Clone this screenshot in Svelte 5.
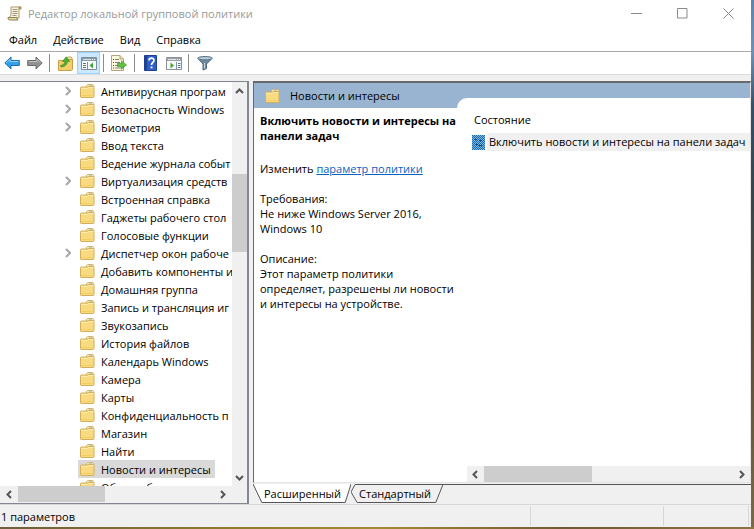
<script>
  const menu = ["Файл", "Действие", "Вид", "Справка"];

  const folders = [
    { name: "Антивирусная програм", nested: true },
    { name: "Безопасность Windows", nested: true },
    { name: "Биометрия", nested: true },
    { name: "Ввод текста" },
    { name: "Ведение журнала событ" },
    { name: "Виртуализация средств", nested: true },
    { name: "Встроенная справка" },
    { name: "Гаджеты рабочего стол" },
    { name: "Голосовые функции" },
    { name: "Диспетчер окон рабоче", nested: true },
    { name: "Добавить компоненты и" },
    { name: "Домашняя группа" },
    { name: "Запись и трансляция иг" },
    { name: "Звукозапись" },
    { name: "История файлов" },
    { name: "Календарь Windows" },
    { name: "Камера" },
    { name: "Карты" },
    { name: "Конфиденциальность п" },
    { name: "Магазин" },
    { name: "Найти" },
    { name: "Новости и интересы" },
    { name: "Общая сборка" }
  ];

  let selected = $state("Новости и интересы");
</script>

{#snippet folder()}
  <svg width="15" height="14" viewBox="0 0 15 14" aria-hidden="true">
    <path d="M6.500 4V1.500l1-1h5.500l.500 1V4z" fill="#f6ebc0" stroke="#d0b671" />
    <path d="M9 2h3" stroke="#9aa59a" />
    <path d="M.5 3.500l.500-.500h6.500l1-.500H14v10l-.500 1H1l-.500-.500z" fill="#f8da80" stroke="#d3af58" />
    <path d="M1 4.500h6.500l1-1h5" fill="none" stroke="#fcecb2" />
    <path d="M1 11.500h12.500" stroke="#f3cd68" />
  </svg>
{/snippet}

{#snippet arrow(dir)}
  <button class="arrow" aria-label="Прокрутка">
    <svg class={dir} width="9" height="9" viewBox="0 0 9 9">
      <path d="M6 1L2.500 4.500L6 8" fill="none" stroke="#555" stroke-width="2" />
    </svg>
  </button>
{/snippet}

<div class="desktop">
  <div class="window">
    <header class="titlebar">
      <svg width="15" height="15" viewBox="0 0 15 15" aria-hidden="true">
        <path d="M4 1h9.500l-1.500 2v9H2.500V11L4 9z" fill="#fbf4d8" stroke="#a99a70" />
        <path d="M1 11.500h9v1.500l1 1H2.500L1 13z" fill="#eadba6" stroke="#8f8158" />
        <path d="M5.500 3.500h5M5.500 5.500h5M5.500 7.500h5M5.500 9.500h4" stroke="#9b9683" />
        <path d="M12 3V1h2v2z" fill="#e0cd8d" stroke="#9b8a5c" />
      </svg>
      <h1>Редактор локальной групповой политики</h1>
      <div class="controls">
        <button aria-label="Свернуть"><svg width="11" height="11"><path d="M0 5.500h11" /></svg></button>
        <button aria-label="Развернуть"><svg width="11" height="11"><path d="M.5.5h9.500v9.500H.5z" /></svg></button>
        <button aria-label="Закрыть"><svg width="11" height="11"><path d="M.5.5l10 10M10.500.5l-10 10" /></svg></button>
      </div>
    </header>

    <nav class="menu">
      {#each menu as item}
        <button>{item}</button>
      {/each}
    </nav>

    <div class="toolbar">
      <button aria-label="Назад">
        <svg width="16" height="14" viewBox="0 0 16 14">
          <path d="M.8 7L7 1v3.500h8.300v5H7V13z" fill="#35a0e6" stroke="#1970b5" />
          <path d="M2.500 6.800L6 3.300v2.200h8.300" fill="none" stroke="#8fd2fa" />
        </svg>
      </button>
      <button aria-label="Вперёд">
        <svg width="16" height="14" viewBox="0 0 16 14">
          <path d="M15.200 7L9 1v3.500H.7v5H9V13z" fill="#929292" stroke="#6a6a6a" />
          <path d="M1.700 5.500H10V3.300l3.500 3.500" fill="none" stroke="#c2c2c2" />
        </svg>
      </button>
      <i class="sep"></i>
      <button aria-label="Вверх">
        <svg width="15" height="15" viewBox="0 0 15 15">
          <path d="M8.500 4V2l1-1H13l1 1v3z" fill="#f3e3a4" stroke="#c9a95b" />
          <path d="M.5 4.500h8l1-1h5v10l-1 1H.5z" fill="#f3cf6c" stroke="#c99f45" />
          <path d="M2.500 9.500C5.500 9 6.800 7.500 7 5.500H4.500L8.200.8l3.500 4.700H9.500C9 9 6.500 10.800 3 11z" fill="#4fae34" stroke="#2f8420" stroke-width=".6" />
        </svg>
      </button>
      <button class="active" aria-label="Дерево консоли">
        <svg width="16" height="13" viewBox="0 0 16 13">
          <path d="M.5.500h15v12H.5z" fill="#f6f8f9" stroke="#7e8d98" />
          <path d="M1 1h14v3H1z" fill="#8799a7" />
          <path d="M2 2.500h8" stroke="#d9e2e9" />
          <path d="M11 2.500h1M13 2.500h1" stroke="#fff" />
          <path d="M6.500 5v7.500" stroke="#7e8d98" />
          <path d="M2 6.500h3M2 8.500h3M2 10.500h3" stroke="#5c7384" />
          <path d="M12 5.500v6L8.500 8.500z" fill="#3fa535" />
        </svg>
      </button>
      <i class="sep"></i>
      <button aria-label="Экспорт списка">
        <svg width="17" height="16" viewBox="0 0 17 16">
          <path d="M.5.500H9L12.500 4v11.500H.5z" fill="#fdf7dc" stroke="#b3a57b" />
          <path d="M9 .5V4h3.500" fill="#e9dcae" stroke="#b3a57b" />
          <path d="M4 4.500h4M4 7.500h5M4 10.500h4M4 13h6" stroke="#7a7f86" />
          <path d="M2 4.500h1M2 7.500h1M2 10.500h1M2 13h1" stroke="#43484e" />
          <path d="M6.500 8.500h4V5.800l5 4.200-5 4.200v-2.700h-4z" fill="#64c043" stroke="#3a9526" stroke-width=".7" />
        </svg>
      </button>
      <i class="sep"></i>
      <button aria-label="Справка">
        <svg width="13" height="16" viewBox="0 0 13 16">
          <path d="M.5.500h12v15H.5z" fill="#2e5fc6" stroke="#1f3f93" />
          <path d="M1 1h2v14H1z" fill="#1e4199" />
          <path d="M5 5.500C5 2.500 10 2.300 10 5.300C10 7.500 7.500 7.300 7.500 10" fill="none" stroke="#fff" stroke-width="1.700" />
          <path d="M6.600 11.500h1.900v1.800H6.600z" fill="#fff" />
        </svg>
      </button>
      <button aria-label="Панель действий">
        <svg width="16" height="13" viewBox="0 0 16 13">
          <path d="M.5.500h15v12H.5z" fill="#f6f8f9" stroke="#8d9298" />
          <path d="M1 1h14v3H1z" fill="#9a9fa5" />
          <path d="M2 2.500h8" stroke="#e4e6e8" />
          <path d="M11 2.500h1M13 2.500h1" stroke="#fff" />
          <path d="M10.500 5v7.500" stroke="#8d9298" />
          <path d="M12 6.500h2.500M12 8.500h2.500M12 10.500h2.500" stroke="#4f7ba8" />
          <path d="M4.500 5.500v6L8 8.500z" fill="#3fa535" />
        </svg>
      </button>
      <i class="sep"></i>
      <button aria-label="Фильтр">
        <svg width="16" height="15" viewBox="0 0 16 15">
          <path d="M1 2.500L6 8v6l3.500-1.500V8L15 2.500z" fill="#6f8ba1" stroke="#4c6678" />
          <ellipse cx="8" cy="2.200" rx="7.300" ry="1.700" fill="#b5c8d6" stroke="#5a7488" />
          <path d="M7.500 7v5.500" stroke="#c9d8e2" />
        </svg>
      </button>
    </div>

    <main>
      <section class="tree">
        <div class="tree-body">
          <ul>
            {#each folders as item}
              <li>
                <span class="chevron">
                  {#if item.nested}
                    <svg width="6" height="10" viewBox="0 0 6 10"><path d="M1 1l4 4-4 4" fill="none" stroke="#a6a6a6" stroke-width="2" /></svg>
                  {/if}
                </span>
                <button class:selected={selected === item.name} onclick={() => (selected = item.name)}>
                  {@render folder()}{item.name}
                </button>
              </li>
            {/each}
          </ul>
          <div class="vscroll">
            {@render arrow("up")}
            <div class="track"><div class="thumb"></div></div>
            {@render arrow("down")}
          </div>
        </div>
        <div class="hscroll">
          {@render arrow("left")}
          <div class="track"><div class="thumb"></div></div>
          {@render arrow("right")}
        </div>
      </section>

      <section class="details">
        <div class="content">
          <div class="heading">{@render folder()}<h2>{selected}</h2></div>
          <div class="columns">
            <article>
              <h3>Включить новости и интересы на панели задач</h3>
              <p class="edit">Изменить <a href="#policy">параметр политики</a></p>
              <p>Требования:<br />Не ниже Windows Server 2016, Windows 10</p>
              <p>Описание:<br />Этот параметр политики определяет, разрешены ли новости и интересы на устройстве.</p>
            </article>
            <div class="list">
              <table>
                <thead>
                  <tr><th>Состояние</th></tr>
                </thead>
                <tbody>
                  <tr>
                    <td>
                      <div class="policy">
                        <svg width="13" height="15" viewBox="0 0 13 15" aria-hidden="true">
                          <defs>
                            <pattern id="dither" width="2" height="2" patternUnits="userSpaceOnUse">
                              <path d="M0 0h1v1H0zM1 1h1v1H1z" fill="#1a6cae" />
                            </pattern>
                          </defs>
                          <path d="M0 0h13v15H0z" fill="#7fb4dc" />
                          <path d="M0 0h13v15H0z" fill="url(#dither)" />
                          <path d="M3 4h2v1H3zM4 9h2v1H4zM7 5h3v1H7zM7 10h3v1H7z" fill="#0b3f78" />
                        </svg>
                        <span>Включить новости и интересы на панели задач</span>
                      </div>
                    </td>
                  </tr>
                </tbody>
              </table>
              <div class="hscroll">
                {@render arrow("left")}
                <div class="track"><div class="thumb"></div></div>
                {@render arrow("right")}
              </div>
            </div>
          </div>
        </div>
        <div class="tabs">
          <button class="tab current">
            <svg viewBox="0 0 100 19" preserveAspectRatio="none" aria-hidden="true">
              <path d="M0 0L9 18.500H94L100 0" fill="#fff" stroke="#555" vector-effect="non-scaling-stroke" />
            </svg>
            <span>Расширенный</span>
          </button>
          <button class="tab">
            <svg viewBox="0 0 90 19" preserveAspectRatio="none" aria-hidden="true">
              <path d="M4 .5L0 8L6 18.500H83L90 .5z" fill="#f0f0f0" stroke="#555" vector-effect="non-scaling-stroke" />
            </svg>
            <span>Стандартный</span>
          </button>
          <i class="rule"></i>
        </div>
      </section>
    </main>

    <footer>
      <span>1 параметров</span>
      <i class="wide"></i>
      <i></i>
    </footer>
  </div>
</div>

<style>
  .desktop {
    box-sizing: border-box;
    height: 100vh;
    padding: 0 3px 2px 0;
    background:
      linear-gradient(90deg, #6b5f3c, #8b7c2c 30%, #a08c33 50%, #6d5a34 75%, #8a7442) bottom / 100% 2px no-repeat,
      linear-gradient(#5a86b4, #6c91b8 10%, #35506a 20%, #35454e 35%, #5a4b38 60%, #7c6846);
    font: 11px/15px "Open Sans", "Noto Sans", sans-serif;
    color: #000;
  }
  .window {
    display: flex;
    flex-direction: column;
    height: 100%;
    background: #f0f0f0;
  }
  button {
    display: flex;
    align-items: center;
    padding: 0;
    border: 0;
    background: none;
    font: inherit;
    color: inherit;
  }
  h1, h2, h3, p, ul {
    margin: 0;
    padding: 0;
    font: inherit;
  }
  svg {
    flex: none;
    display: block;
  }

  .titlebar {
    display: flex;
    align-items: center;
    gap: 6px;
    height: 27px;
    padding-left: 7px;
    background: #fff;
    color: #999;
  }
  .controls {
    display: flex;
    margin-left: auto;
  }
  .controls button {
    justify-content: center;
    width: 46px;
    height: 27px;
  }
  .controls path {
    fill: none;
    stroke: #8a8a8a;
  }
  .menu {
    display: flex;
    gap: 16px;
    height: 24px;
    padding-left: 9px;
    background: #fff;
    border-bottom: 1px solid #a8a8a8;
  }
  .toolbar {
    display: flex;
    align-items: center;
    height: 22px;
    background: #fff;
    border-bottom: 1px solid #dcdcdc;
  }
  .toolbar button {
    justify-content: center;
    width: 23px;
    height: 22px;
  }
  .toolbar .active {
    box-sizing: border-box;
    background: #cce8ff;
    border: 1px solid #99d1ff;
  }
  .sep {
    width: 1px;
    height: 18px;
    margin: 0 4px 0 3px;
    background: #8c8c8c;
  }

  main {
    flex: 1;
    display: flex;
    gap: 4px;
    min-height: 0;
    padding-top: 6px;
  }
  .tree {
    flex: 0 0 249px;
    min-width: 0;
    box-sizing: border-box;
    display: flex;
    flex-direction: column;
    border: 1px solid #828790;
    border-width: 1px 2px 1px 0;
    background: #f0f0f0;
  }
  .tree-body {
    flex: 1;
    display: flex;
    min-height: 0;
  }
  .tree ul {
    flex: 1;
    min-width: 0;
    overflow: hidden;
    background: #fff;
    list-style: none;
  }
  li {
    display: flex;
    height: 18px;
    padding-left: 65px;
  }
  .chevron {
    flex: none;
    display: flex;
    align-items: center;
    width: 13px;
  }
  li button {
    gap: 6px;
    padding: 0 4px 0 2px;
    white-space: nowrap;
  }
  .selected {
    background: #d9d9d9;
  }

  .vscroll, .hscroll {
    flex: none;
    display: flex;
    background: #f0f0f0;
  }
  .vscroll {
    flex-direction: column;
    width: 15px;
  }
  .arrow {
    flex: none;
    justify-content: center;
    width: 17px;
    height: 16px;
  }
  .vscroll .arrow {
    width: 15px;
    height: 18px;
  }
  .up {
    transform: rotate(90deg);
  }
  .right {
    transform: rotate(180deg);
  }
  .down {
    transform: rotate(270deg);
  }
  .track {
    flex: 1;
    display: flex;
  }
  .vscroll .track {
    flex-direction: column;
    padding-top: 74px;
  }
  .thumb {
    background: #cdcdcd;
    width: 108px;
  }
  .vscroll .thumb {
    width: 15px;
    height: 78px;
  }
  .tree .hscroll {
    padding: 0 16px 1px 1px;
  }
  .tree .hscroll .thumb {
    width: 87px;
  }

  .details {
    flex: 1;
    display: flex;
    flex-direction: column;
    min-width: 0;
  }
  .content {
    flex: 1;
    display: flex;
    flex-direction: column;
    min-height: 0;
    border: 1px solid #696969;
    border-width: 2px 1px 1px 1px;
    border-right-color: #e3e3e3;
    border-bottom-color: #e3e3e3;
    background: #fff;
  }
  .heading {
    display: flex;
    align-items: center;
    gap: 10px;
    height: 25px;
    padding-left: 11px;
    background: #99b4d1;
  }
  .columns {
    flex: 1;
    display: flex;
    min-height: 0;
  }
  article {
    flex: 0 0 203px;
    box-sizing: border-box;
    min-width: 0;
    padding: 5px 0 0 6px;
  }
  h3 {
    font-weight: bold;
  }
  p {
    margin-top: 15px;
  }
  .edit {
    margin-top: 18px;
  }
  a {
    color: #0563c1;
  }
  .list {
    flex: 1;
    display: flex;
    flex-direction: column;
    justify-content: space-between;
    min-width: 0;
    margin-top: -10px;
    padding-left: 10px;
    border-top-left-radius: 10px;
    background: #fff;
  }
  table {
    width: 100%;
    table-layout: fixed;
    border-collapse: collapse;
  }
  th {
    padding: 14px 0 6px 7px;
    font-weight: normal;
    text-align: left;
  }
  td {
    padding: 0;
  }
  .policy {
    display: flex;
    align-items: center;
    gap: 2px;
    overflow: hidden;
    padding-left: 5px;
    white-space: nowrap;
  }
  .policy span {
    flex: 1;
    padding: 1px 0 2px 2px;
    background: #f0f0f0;
  }
  .list .hscroll {
    height: 16px;
  }

  .tabs {
    display: flex;
    height: 20px;
    padding-top: 1px;
  }
  .tab {
    position: relative;
    height: 19px;
    padding: 0 10px 0 11px;
  }
  .tab + .tab {
    padding: 0 12px 0 8px;
  }
  .tab svg {
    position: absolute;
    inset: 0;
    width: 100%;
    height: 100%;
  }
  .tab span {
    position: relative;
  }
  .rule {
    flex: 1;
    border-top: 1px solid #555;
  }

  footer {
    display: flex;
    align-items: center;
    height: 22px;
    padding: 0 2px 0 1px;
    border-top: 1px solid #d7d7d7;
  }
  footer span {
    flex: 1;
  }
  footer i {
    box-sizing: border-box;
    width: 85px;
    height: 20px;
    border: solid #d7d7d7;
    border-width: 0 1px 0 0;
  }
  footer .wide {
    width: 134px;
    border-left-width: 1px;
  }
</style>
